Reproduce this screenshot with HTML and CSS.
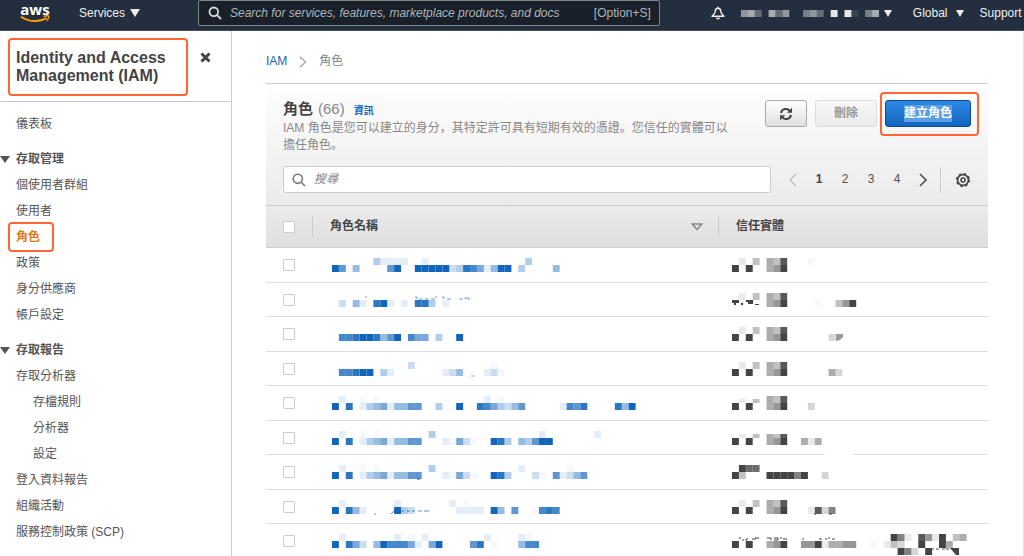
FILE: index.html
```html
<!DOCTYPE html>
<html lang="zh-Hant">
<head>
<meta charset="utf-8">
<title>IAM</title>
<link rel="stylesheet" href="styles.css">
</head>
<body>
<header class="topbar">
  <a class="logo" href="#" aria-label="aws">
    <span class="logo-text">aws</span>
    <svg class="logo-smile" viewBox="0 0 30 9" width="30" height="9"><path d="M1 1.5C8 7 19 7.500 26.500 3" fill="none" stroke="#f90" stroke-width="2"/><path d="M23.500 1.300C26 .5 28.500.5 28.700 1.200S28 4.500 26.500 6" fill="none" stroke="#f90" stroke-width="1.400"/></svg>
  </a>
  <button class="menu services">Services <span class="caret"></span></button>
  <label class="global-search">
    <svg viewBox="0 0 14 14" width="14" height="14" fill="none" stroke="#d5dbdb" stroke-width="1.800"><circle cx="5.800" cy="5.800" r="4.300"/><path d="M9 9l4 4"/></svg>
    <input type="search" placeholder="Search for services, features, marketplace products, and docs" aria-label="Search">
    <span>[Option+S]</span>
  </label>
  <div class="account">
    <button class="menu" aria-label="Notifications"><svg viewBox="0 0 14 14" width="14" height="14" fill="none" stroke="#eee" stroke-width="1.400" stroke-linejoin="round"><path d="M7 .7v1.500M7 2.200C4.800 2.200 4.200 4 4.200 5.500 4 7.800 2.500 8.500 1 10.300h12C11.500 8.500 10 7.800 9.800 5.500 9.800 4 9.200 2.200 7 2.200zM5.500 11.500c.3 1.700 2.700 1.700 3 0"/></svg></button>
    <button class="menu user" aria-label="Account"><svg class="mosaic light" data-lower="563.635..453.9.91.46"></svg><span class="caret"></span></button>
    <button class="menu region">Global <span class="caret"></span></button>
    <button class="menu">Support</button>
  </div>
</header>
<div class="shell">
  <aside class="sidebar">
    <div class="side-head">
      <h2 class="marked">Identity and Access Management (IAM)</h2>
      <button class="close" aria-label="Close"><svg viewBox="0 0 11 11" width="11" height="11"><path d="M1.500 1.500l8 8M9.500 1.500l-8 8" stroke="#444" stroke-width="3"/></svg></button>
    </div>
    <nav>
      <ul>
        <li><a href="#">儀表板</a></li>
      </ul>
      <h3><span class="caret"></span>存取管理</h3>
      <ul>
        <li><a href="#">個使用者群組</a></li>
        <li><a href="#">使用者</a></li>
        <li><a href="#" class="current">角色</a></li>
        <li><a href="#">政策</a></li>
        <li><a href="#">身分供應商</a></li>
        <li><a href="#">帳戶設定</a></li>
      </ul>
      <h3><span class="caret"></span>存取報告</h3>
      <ul>
        <li><a href="#">存取分析器</a>
          <ul>
            <li><a href="#">存檔規則</a></li>
            <li><a href="#">分析器</a></li>
            <li><a href="#">設定</a></li>
          </ul>
        </li>
        <li><a href="#">登入資料報告</a></li>
        <li><a href="#">組織活動</a></li>
        <li><a href="#">服務控制政策 (SCP)</a></li>
      </ul>
    </nav>
  </aside>
  <main>
    <div class="crumbs">
      <a href="#">IAM</a>
      <svg viewBox="0 0 8 12" width="8" height="12" fill="none" stroke="#aaa" stroke-width="1.400"><path d="M1 .7L6.500 6 1 11.300"/></svg>
      <span>角色</span>
    </div>
    <section>
      <div class="panel">
        <div class="panel-top">
          <div class="intro">
            <h1>角色 <span class="count">(66)</span> <a href="#">資訊</a></h1>
            <p lang="zh-Hans">IAM 角色是您可以建立的身分，其特定許可具有短期有效的憑證。您信任的實體可以擔任角色。</p>
          </div>
          <div class="actions">
            <button class="btn refresh" aria-label="重新整理"><svg viewBox="0 0 14 14" width="14" height="14"><path d="M2 6a5 5 0 0 1 8.800-2.200M12 8a5 5 0 0 1-8.800 2.200" fill="none" stroke="#444" stroke-width="2"/><path d="M13 .8v5H8zM1 13.200v-5h5z" fill="#444"/></svg></button>
            <button class="btn delete" disabled>刪除</button>
            <div class="create-wrap"><button class="btn create"><span>建立角色</span></button></div>
          </div>
        </div>
        <div class="tools">
          <label class="search">
            <svg viewBox="0 0 14 14" width="14" height="14" fill="none" stroke="#777" stroke-width="1.600"><circle cx="5.800" cy="5.800" r="4.600"/><path d="M9 9l4 4"/></svg>
            <input type="search" placeholder="搜尋" aria-label="搜尋">
          </label>
          <div class="pages">
            <button aria-label="上一頁"><svg viewBox="0 0 8 14" width="8" height="14" fill="none" stroke="#bbb" stroke-width="1.300"><path d="M7 1L1 7l6 6"/></svg></button>
            <button class="on">1</button><button>2</button><button>3</button><button>4</button>
            <button aria-label="下一頁"><svg viewBox="0 0 8 14" width="8" height="14" fill="none" stroke="#555" stroke-width="1.600"><path d="M1 1l6 6-6 6"/></svg></button>
          </div>
          <button class="gear" aria-label="設定"><svg viewBox="0 0 16 16" width="16" height="16" fill="none" stroke="#444"><circle cx="8" cy="8" r="5.400" stroke-width="1.600"/><circle cx="8" cy="8" r="6.500" stroke-width="1.200" stroke-dasharray="2.550"/><circle cx="8" cy="8" r="2" stroke-width="1.500"/></svg></button>
        </div>
      </div>
      <table>
        <colgroup><col class="c-check"><col class="c-name"><col class="c-entity"></colgroup>
        <thead>
          <tr>
            <th><input type="checkbox" aria-label="全選"></th>
            <th><div class="th">角色名稱 <svg viewBox="0 0 12 8" width="12" height="8"><path d="M1.200 1h9.600L6 6.500z" fill="none" stroke="#888" stroke-width="1.500"/></svg></div></th>
            <th><div class="th">信任實體</div></th>
          </tr>
        </thead>
        <tbody>
          <tr><td><input type="checkbox" aria-label="1"></td>
            <td><svg class="mosaic blue" data-upper="......31111..1..............3" data-lower="96a4....69..99999238751499.3....4"></svg></td>
            <td><svg class="mosaic gray" data-upper=".1.3.438...a" data-lower="9.9..459"></svg></td></tr>
          <tr><td><input type="checkbox" aria-label="2"></td>
            <td><svg class="mosaic blue" data-lower=".2.41.891.1.883.1"><path d="M33 4h2M83 4h2v2M87 6h4M93 6h4M99 6h4M103 4h2M110 4h2v2M115 6h4M127 6h4M133 6v-1h4v2" fill="none" stroke="#16b" opacity=".6"/></svg></td>
            <td><svg class="mosaic gray" data-upper=".1.3.438" data-lower=".....459....a..359"><path d="M0 7h7v3H4v2H2v-2H0zM14 7h7v4h-5v-2h-2zM9 10h2v2H9zM23 11h4v1h-4z" fill="#444"/></svg></td></tr>
          <tr><td><input type="checkbox" aria-label="3"></td>
            <td><svg class="mosaic blue" data-lower=".778998469.755.3..9"></svg></td>
            <td><svg class="mosaic gray" data-upper=".1.3.438" data-lower="9.9..459......2"><path d="M104 7h7v3l-3 3-4 1z" fill="#999"/></svg></td></tr>
          <tr><td><input type="checkbox" aria-label="4"></td>
            <td><svg class="mosaic blue" data-upper="...........2...........a" data-lower=".77899.31.......124...12a"><path d="M139 14h4" stroke="#16b" opacity=".5"/></svg></td>
            <td><svg class="mosaic gray" data-upper=".1.3.438" data-lower="9.9..459......42"></svg></td></tr>
          <tr><td><input type="checkbox" aria-label="5"></td>
            <td><svg class="mosaic blue" data-upper=".1..a.a...............1.a" data-lower="9.8.134514466..3..9..8753246.....1768....849"></svg></td>
            <td><svg class="mosaic gray" data-upper=".1.3.438" data-lower="9.9..459...2"><path d="M5 0h25v3H5z" fill="#fff"/></svg></td></tr>
          <tr><td><input type="checkbox" aria-label="6"></td>
            <td><svg class="mosaic blue" data-upper=".1..a.a.......3...............1.......1" data-lower="9.8.134514466...1a52a..983.43699"></svg></td>
            <td><svg class="mosaic gray" data-upper=".1.3.438" data-lower="9.9..459..414"><path d="M5 0h51v3H5z" fill="#fff"/></svg></td></tr>
          <tr><td><input type="checkbox" aria-label="7"></td>
            <td><svg class="mosaic blue" data-upper=".1..a.a.......3............1......a" data-lower="9.8.134514466...1a52a..983...2a.61246"><path d="M85 14h3" stroke="#16b" stroke-width="2" opacity=".5"/></svg></td>
            <td><svg class="mosaic gray" data-upper=".977" data-lower="93...999969..2"><path d="M93-10h28" stroke="#fff" stroke-width="2"/></svg></td></tr>
          <tr><td><input type="checkbox" aria-label="8"></td>
            <td><svg class="mosaic blue" data-upper=".1.......1.......1.a" data-lower="9.841....932......1111.94.6..a787"><path d="M42 14h2M59 14l3-3M69 11h3M75 11h3M80 11h3M86 11h4M92 11h5" stroke="#16b" opacity=".7"/></svg></td>
            <td><svg class="mosaic gray" data-upper=".1.3.438" data-lower="9.9..459...1826"><path d="M82 14h2M97 14h3" stroke="#444"/></svg></td></tr>
          <tr><td><input type="checkbox" aria-label="9"></td>
            <td><svg class="mosaic blue" data-upper=".1.......1.a.1........1....1a" data-lower="9.852.4977751.59....68.a...477"></svg></td>
            <td><svg class="mosaic gray" data-upper=".......................961.8519.34" data-lower="9.9..459..55914455..a.132..9..94" data-third="........................962.9......"><path d="M7 4h2M10 6h2M13 6h2V4M20 5h2M23 6v-2h4M35 4h4v2M42 4h4v2h-4M48 4h2M51 5h4M71 4v2M87 5h3M93 5h2M96 4h2M100 5h3" fill="none" stroke="#444"/><path d="M196 15h6M204 15h4M210 15h8" stroke="#444" stroke-dasharray="3 1"/><path d="M218 14h9v7h-3z" fill="#444"/></svg></td></tr>
        </tbody>
      </table>
    </section>
  </main>
</div>
<script src="mosaic.js"></script>
</body>
</html>
```
FILE: mosaic.js
```js
// Draws redacted values as a strip of blocks. Each character is one block:
// 1-9 is its strength, "a" a barely visible one, anything else is empty.
const CELL = 6.9;
document.querySelectorAll('.mosaic').forEach(svg => {
  const own = svg.innerHTML;
  const rows = [svg.dataset.upper, svg.dataset.lower, svg.dataset.third];
  const first = svg.classList.contains('light') ? 1 : 0;
  let out = '';
  rows.forEach((row, y) => [...(row || '')].forEach((ch, x) => {
    const level = ch === 'a' ? 0.04 : Number(ch) / 9;
    if (!level) return;
    out += `<rect x="${(x * CELL).toFixed(1)}" y="${(y - first) * 7}" width="${CELL}" height="7" fill-opacity="${level.toFixed(2)}"/>`;
  }));
  svg.innerHTML = out + own;
});
```
FILE: styles.css
```css
* { box-sizing: border-box; }
body {
  margin: 0;
  height: 100vh;
  display: flex;
  flex-direction: column;
  overflow: hidden;
  font: 12px/17px "Liberation Sans", "Noto Sans CJK TC", sans-serif;
  color: #555;
  background: #fff;
}
button, input { font: inherit; color: inherit; margin: 0; }
button { padding: 0; border: 0; background: none; }
a { color: #16b; text-decoration: none; }
ul { list-style: none; margin: 0; padding: 0; }
h1, h2, h3, p { margin: 0; }
svg { display: block; flex: none; }
.mosaic { overflow: visible; height: 14px; width: 100px; }
.blue { fill: #16b; }
.gray { fill: #444; }
.light { fill: #e4e8ea; width: 138px; height: 7px; }
.caret {
  display: inline-block;
  border: solid transparent;
  border-width: 8px 5px 0;
  border-top-color: currentColor;
}

.topbar {
  flex: none;
  height: 31px;
  display: flex;
  align-items: center;
  padding: 0 0 4px 20px;
  background: #232f3e;
  border-bottom: 1px solid #414d5c;
  color: #eee;
  white-space: nowrap;
}
.logo { width: 30px; margin-right: 29px; color: #fff; }
.logo-text { display: block; text-align: center; font: bold 15px/12px "Open Sans", sans-serif; }
.menu { display: flex; align-items: center; gap: 5px; }
.services { margin-right: 58px; }
.account .caret { border-width: 7px 4px 0; }
.global-search {
  flex: none;
  width: 46%;
  max-width: 466px;
  height: 26px;
  display: flex;
  align-items: center;
  gap: 8px;
  padding: 0 8px 0 9px;
  background: #1a2029;
  border: 1px solid #7b8787;
  border-radius: 2px;
  color: #aab7b8;
}
.global-search input {
  flex: 1;
  min-width: 0;
  padding: 0;
  border: 0;
  outline: 0;
  background: none;
}
.global-search input::placeholder { color: #aab7b8; font-style: italic; }
.account { flex: 1 0 auto; display: flex; align-items: center; padding-left: 51px; }
.user { margin: 0 21px 0 16px; }
.region { gap: 8px; margin-right: 16px; }

.shell { flex: 1; min-height: 0; display: flex; border-right: 1px solid #e2e2e2; }
.sidebar { flex: none; width: 232px; border-right: 1px solid #ccc; }
.side-head { display: flex; align-items: flex-start; padding: 7px 8px 5px; border-bottom: 1px solid #ccc; }
.marked {
  width: 180px;
  padding: 9px 6px;
  border: 2px solid #f63;
  border-radius: 4px;
  font-size: 16px;
  line-height: 18px;
  color: #444;
}
.close { margin: 14px 0 0 12px; }
nav { padding-top: 9px; }
nav li a { display: block; width: max-content; margin-left: 16px; line-height: 26px; color: #555; }
nav ul ul a { margin-left: 33px; }
nav h3 { display: flex; align-items: center; gap: 6px; margin-top: 9px; font-size: 12px; line-height: 26px; }
nav h3 .caret { border-width: 7px 5px 0; }
nav li a.current { position: relative; color: #e47911; font-weight: bold; }
.current::after {
  content: "";
  position: absolute;
  inset: -2px -14px -2px -8px;
  border: 2px solid #f63;
  border-radius: 4px;
}

main { flex: 1; min-width: 0; padding: 0 35px 0 34px; }
.crumbs { display: flex; align-items: center; gap: 12px; height: 52px; padding-top: 9px; color: #888; }
.panel {
  padding: 16px 17px 12px;
  border-top: 1px solid #ccc;
  background: linear-gradient(#fefefe, #ebebeb);
}
.panel-top { display: flex; justify-content: space-between; }
.intro { width: 452px; color: #888; }
.intro p { font-family: "Liberation Sans", "Noto Sans CJK SC", sans-serif; }
h1 { font-size: 15px; line-height: 18px; color: #444; display: flex; align-items: baseline; gap: 5px; }
h1 a { font-size: 10px; margin-left: 4px; }
.count { font-weight: normal; color: #888; }
.actions { display: flex; gap: 8px; }
.btn {
  height: 27px;
  border: 1px solid #aaa;
  border-radius: 3px;
  background: linear-gradient(#fff, #dfdfdf);
  font-weight: bold;
  display: flex;
  align-items: center;
  justify-content: center;
}
.refresh { width: 42px; }
.delete { width: 62px; color: #999; background: linear-gradient(#f8f8f8, #ebebeb); border-color: #ddd; }
.create { width: 86px; color: #fff; border-color: #0c4a8c; background: linear-gradient(#2b88e6, #1166bb); }
.create span { background: #5a9fe3; }
.create-wrap { position: relative; }
.create-wrap::after {
  content: "";
  position: absolute;
  inset: -8px -8px auto -5px;
  height: 40px;
  border: 2px solid #f63;
  border-radius: 4px;
}
.tools { display: flex; align-items: center; margin-top: 12px; }
.search {
  flex: 1;
  height: 27px;
  display: flex;
  align-items: center;
  gap: 8px;
  padding: 0 8px;
  background: #fff;
  border: 1px solid #ccc;
  border-radius: 3px;
}
.search input { flex: 1; padding: 0; border: 0; outline: 0; background: none; }
.search input::placeholder { color: #888; font-style: italic; }
.pages { display: flex; margin-left: 9px; }
.pages button { width: 26px; height: 26px; display: flex; align-items: center; justify-content: center; }
.pages .on { font-weight: bold; color: #444; }
.gear { height: 26px; margin-left: 4px; padding-left: 14px; border-left: 1px solid #ccc; }

table { width: 100%; border-collapse: separate; border-spacing: 0; table-layout: fixed; }
.c-check { width: 46px; }
.c-name { width: 406px; }
thead { background: linear-gradient(#ececec, #dedede); color: #444; }
th { height: 43px; padding: 0; text-align: left; border: solid #ccc; border-width: 1px 0; }
.th { display: flex; align-items: center; justify-content: space-between; height: 21px; padding: 0 15px 0 17px; border-left: 1px solid #ccc; }
td { height: 35px; padding: 0 0 0 20px; border-bottom: 1px solid #ddd; }
td:last-child { padding-left: 14px; }
tr:nth-child(even) td { height: 34px; }
th:first-child, td:first-child { padding: 0 0 0 17px; }
input[type="checkbox"] {
  appearance: none;
  display: block;
  width: 12px;
  height: 12px;
  background: #fff;
  border: 1px solid #ccc;
  border-radius: 1px;
}
```
